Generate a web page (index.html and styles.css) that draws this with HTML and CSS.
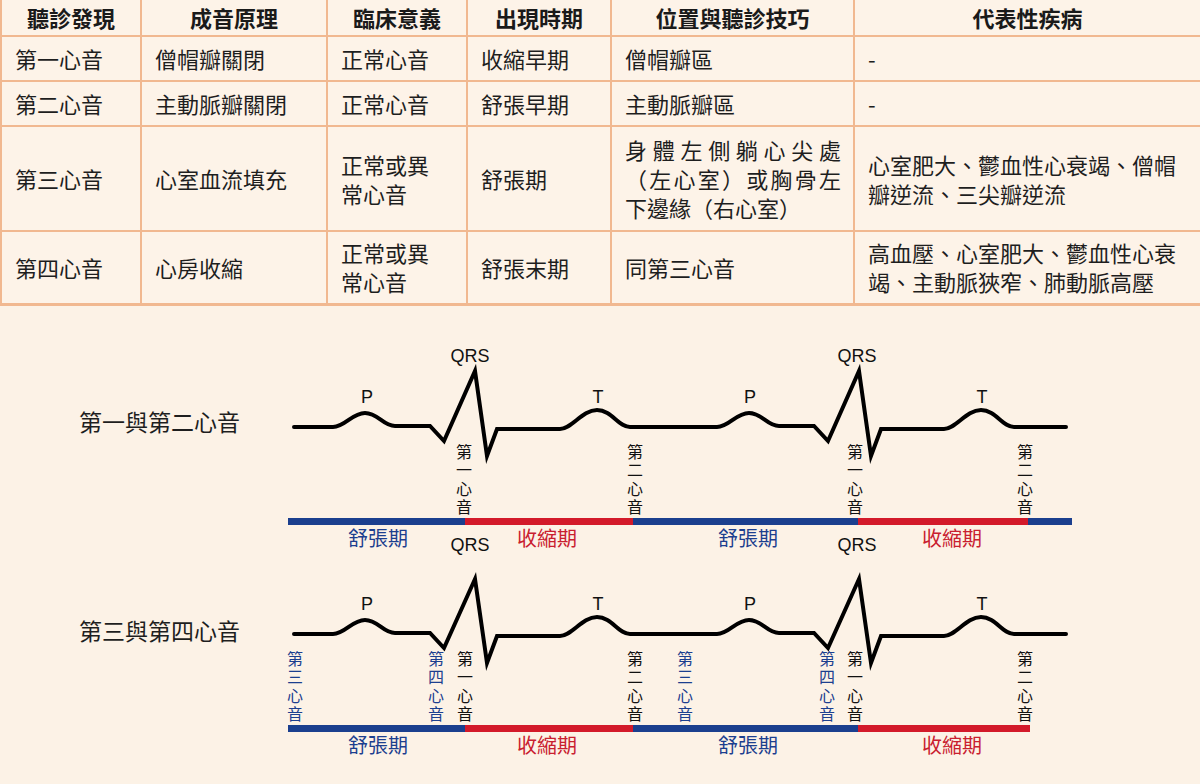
FILE: index.html
```html
<!DOCTYPE html>
<html lang="zh-Hant">
<head>
<meta charset="utf-8">
<title>心音比較</title>
<link rel="stylesheet" href="styles.css">
</head>
<body>
<table class="findings">
  <colgroup>
    <col class="c1"><col class="c2"><col class="c3"><col class="c4"><col class="c5"><col class="c6">
  </colgroup>
  <thead>
    <tr class="r-head">
      <th>聽診發現</th><th>成音原理</th><th>臨床意義</th><th>出現時期</th><th>位置與聽診技巧</th><th>代表性疾病</th>
    </tr>
  </thead>
  <tbody>
    <tr class="r-short">
      <td>第一心音</td><td>僧帽瓣關閉</td><td>正常心音</td><td>收縮早期</td><td>僧帽瓣區</td><td>-</td>
    </tr>
    <tr class="r-short">
      <td>第二心音</td><td>主動脈瓣關閉</td><td>正常心音</td><td>舒張早期</td><td>主動脈瓣區</td><td>-</td>
    </tr>
    <tr class="r-tall">
      <td>第三心音</td><td>心室血流填充</td><td>正常或異<br>常心音</td><td>舒張期</td>
      <td><span class="jline">身體左側躺心尖處</span><span class="jline">（左心室）或胸骨左</span><span class="line">下邊緣（右心室）</span></td>
      <td>心室肥大、鬱血性心衰竭、僧帽<br>瓣逆流、三尖瓣逆流</td>
    </tr>
    <tr class="r-mid">
      <td>第四心音</td><td>心房收縮</td><td>正常或異<br>常心音</td><td>舒張末期</td><td>同第三心音</td>
      <td>高血壓、心室肥大、鬱血性心衰<br>竭、主動脈狹窄、肺動脈高壓</td>
    </tr>
  </tbody>
</table>

<section class="diagram">
  <div class="titles">
    <h2 class="title">第一與第二心音</h2>
    <h2 class="title">第三與第四心音</h2>
  </div>
  <svg class="ecg" width="820" height="480" viewBox="280 304 820 480" xmlns="http://www.w3.org/2000/svg">
    <!-- Diagram 1 -->
    <path class="wave" d="M294,425 L333,425 C345,425 352,411 365,411 C378,411 383,424 395,424 L430,424 L444,439 L475,369 L487,454 L497,427 L560,427 C572,427 582,408 597,408 C612,408 618,425 630,425 L717,425 C729,425 736,411 749,411 C762,411 767,424 779,424 L814,424 L828,439 L859,369 L871,454 L881,427 L944,427 C956,427 966,408 981,408 C996,408 1002,425 1014,425 L1066,425"/>
    <text class="lat" x="470" y="360">QRS</text>
    <text class="lat" x="857" y="360">QRS</text>
    <text class="lat" x="367" y="401">P</text>
    <text class="lat" x="598" y="401">T</text>
    <text class="lat" x="750" y="401">P</text>
    <text class="lat" x="982" y="401">T</text>

    <text class="vert" x="464" y="442">第一心音</text>
    <text class="vert" x="635" y="442">第二心音</text>
    <text class="vert" x="855" y="442">第一心音</text>
    <text class="vert" x="1025" y="442">第二心音</text>

    <rect class="dia" x="288" y="516" width="177" height="7"/>
    <rect class="sys" x="465" y="516" width="168" height="7"/>
    <rect class="dia" x="633" y="516" width="225" height="7"/>
    <rect class="sys" x="858" y="516" width="170" height="7"/>
    <rect class="dia" x="1028" y="516" width="44" height="7"/>

    <text class="phase dia-t" x="378" y="544">舒張期</text>
    <text class="phase sys-t" x="547" y="544">收縮期</text>
    <text class="phase dia-t" x="748" y="544">舒張期</text>
    <text class="phase sys-t" x="952" y="544">收縮期</text>

    <!-- Diagram 2 -->
    <path class="wave" d="M294,632 L333,632 C345,632 352,618 365,618 C378,618 383,631 395,631 L430,631 L444,646 L475,577 L487,661 L497,634 L560,634 C572,634 582,615 597,615 C612,615 618,632 630,632 L717,632 C729,632 736,618 749,618 C762,618 767,631 779,631 L814,631 L828,646 L859,577 L871,661 L881,634 L944,634 C956,634 966,615 981,615 C996,615 1002,632 1014,632 L1066,632"/>
    <text class="lat" x="470" y="549">QRS</text>
    <text class="lat" x="857" y="549">QRS</text>
    <text class="lat" x="367" y="608">P</text>
    <text class="lat" x="598" y="608">T</text>
    <text class="lat" x="750" y="608">P</text>
    <text class="lat" x="982" y="608">T</text>

    <text class="vert blue" x="295" y="649">第三心音</text>
    <text class="vert blue" x="436" y="649">第四心音</text>
    <text class="vert" x="465" y="649">第一心音</text>
    <text class="vert" x="635" y="649">第二心音</text>
    <text class="vert blue" x="685" y="649">第三心音</text>
    <text class="vert blue" x="827" y="649">第四心音</text>
    <text class="vert" x="855" y="649">第一心音</text>
    <text class="vert" x="1025" y="649">第二心音</text>

    <rect class="dia" x="288" y="723" width="177" height="7"/>
    <rect class="sys" x="465" y="723" width="168" height="7"/>
    <rect class="dia" x="633" y="723" width="225" height="7"/>
    <rect class="sys" x="858" y="723" width="172" height="7"/>

    <text class="phase dia-t" x="378" y="751">舒張期</text>
    <text class="phase sys-t" x="547" y="751">收縮期</text>
    <text class="phase dia-t" x="748" y="751">舒張期</text>
    <text class="phase sys-t" x="952" y="751">收縮期</text>
  </svg>
</section>
</body>
</html>
```

FILE: styles.css
```css
html, body {
  margin: 0;
  padding: 0;
}

body {
  width: 1200px;
  height: 784px;
  overflow: hidden;
  background: #fcf2e6;
  color: #1e1e1e;
  font-family: "Noto Sans CJK TC", "Noto Sans CJK SC", sans-serif;
}

/* ---------- table ---------- */
.findings {
  width: 1200px;
  border-collapse: collapse;
  table-layout: fixed;
  background: #fdf3e8;
}

.c1 { width: 140px; }
.c2 { width: 186px; }
.c3 { width: 140px; }
.c4 { width: 144px; }
.c5 { width: 243px; }
.c6 { width: 347px; }

.findings th,
.findings td {
  border: 2px solid #f1b890;
  font-size: 22px;
  line-height: 29px;
  vertical-align: middle;
  padding: 0 8px 0 13px;
}

.findings th {
  border-top: none;
  font-weight: 700;
  text-align: center;
  padding: 0;
  color: #1a1a1a;
}

.findings td {
  font-weight: 400;
  text-align: left;
}

.findings tbody tr:last-child td {
  border-bottom: 3px solid #f1b890;
}

.r-head { height: 36px; }
.r-short { height: 45px; }
.r-tall { height: 105px; }
.r-mid { height: 73px; }

.jline,
.line {
  display: block;
  width: 216px;
}

.jline {
  text-align: justify;
  text-align-last: justify;
}

/* ---------- diagram ---------- */
.diagram {
  display: flex;
  height: 480px;
}

.titles {
  width: 201px;
  padding-left: 79px;
  padding-top: 102px;
  display: flex;
  flex-direction: column;
  gap: 183px;
}

.title {
  margin: 0;
  font-size: 23px;
  line-height: 26px;
  font-weight: 400;
  color: #1e1e1e;
  white-space: nowrap;
}

.ecg {
  display: block;
  flex: none;
}

.wave {
  fill: none;
  stroke: #000;
  stroke-width: 4;
  stroke-linejoin: miter;
  stroke-miterlimit: 10;
  stroke-linecap: round;
}

.lat {
  font-family: "Liberation Sans", Arial, sans-serif;
  font-size: 18px;
  fill: #111;
  text-anchor: middle;
}

.vert {
  font-family: "Noto Sans CJK TC", sans-serif;
  font-size: 16px;
  fill: #111;
  writing-mode: vertical-rl;
  text-orientation: upright;
  letter-spacing: 2.3px;
  text-anchor: start;
}

.vert.blue {
  fill: #1c3f8f;
}

.dia { fill: #1b3f8e; }
.sys { fill: #d31a2a; }

.phase {
  font-family: "Noto Sans CJK TC", sans-serif;
  font-size: 20px;
  text-anchor: middle;
}

.dia-t { fill: #1c3f8f; }
.sys-t { fill: #c9202f; }
```
